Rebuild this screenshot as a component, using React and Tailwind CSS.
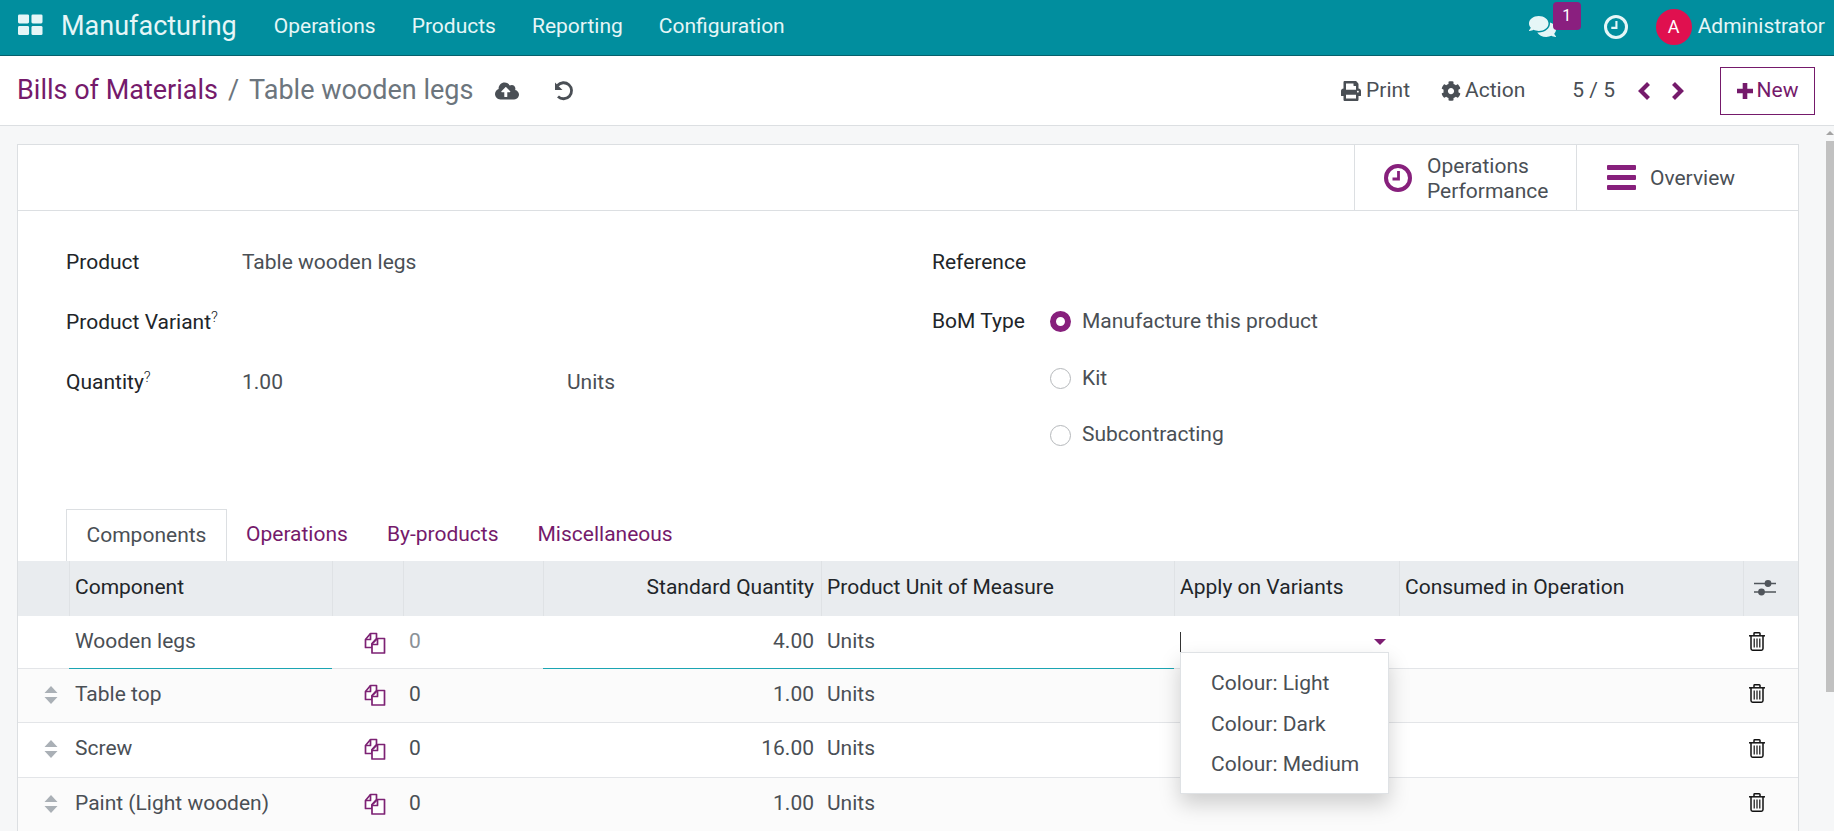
import React from "react";
import { FaComments, FaCloudUploadAlt, FaPrint, FaCog } from "react-icons/fa";

const Clock = ({ size, sw, color, className }) => (
  <svg width={size} height={size} viewBox="0 0 28 28" className={className} fill="none" stroke={color} strokeWidth={sw}>
    <circle cx="14" cy="14" r={14 - sw / 2} />
    <path d="M14.5 7v8H8.5" strokeWidth={sw * 0.7} />
  </svg>
);

const Undo = () => (
  <svg width="22" height="22" viewBox="0 0 22 22" fill="none" stroke="#4a4f55" strokeWidth="2.8">
    <path d="M4.5 5.5A8 8 0 1 1 5 16.5" />
    <path d="M2 2.5v7.5h7.5z" fill="#4a4f55" stroke="none" />
  </svg>
);

const Apps = () => (
  <svg width="25" height="22" viewBox="0 0 26 22" fill="#e6f6f7">
    <rect x="0" y="0" width="11.5" height="9.5" rx="1.5" />
    <rect x="14" y="0" width="11.5" height="9.5" rx="1.5" />
    <rect x="0" y="12" width="11.5" height="9.5" rx="1.5" />
    <rect x="14" y="12" width="11.5" height="9.5" rx="1.5" />
  </svg>
);

const Files = () => (
  <svg width="22" height="22" viewBox="0 0 22 22" fill="#fff" stroke="#7d2274" strokeWidth="1.7" strokeLinejoin="round">
    <path d="M6.5 1.5h6v5l-4.5 5v4H1.5V7.5z" />
    <path d="M6.5 1.5v6h-5" fill="none" />
    <path d="M13.5 6.5h7v14.5h-12.5V12z" />
    <path d="M13.5 6.5v6h-5.5" fill="none" />
  </svg>
);

const Trash = () => (
  <svg width="16" height="19" viewBox="0 0 16 19" fill="none" stroke="#111" strokeWidth="1.5" className="-mt-[2px]">
    <path d="M5 3.5V1.5a.7.7 0 0 1 .7-.7h4.6a.7.7 0 0 1 .7.7v2" />
    <path d="M0 3.8h16" />
    <path d="M2 4v12.6a1.6 1.6 0 0 0 1.6 1.6h8.8a1.6 1.6 0 0 0 1.6-1.6V4" />
    <path d="M5.2 6.5v9M8 6.5v9M10.8 6.5v9" strokeWidth="1.2" />
  </svg>
);

const Sliders = () => (
  <svg width="22" height="18" viewBox="0 0 22 18" fill="#50555b" stroke="#50555b">
    <path d="M0 4.5h22M0 13h22" strokeWidth="1.5" />
    <circle cx="14" cy="4.5" r="3.4" stroke="none" />
    <circle cx="7.5" cy="13" r="3.4" stroke="none" />
  </svg>
);

const Handle = () => (
  <svg width="14" height="18" viewBox="0 0 14 18" fill="#aab0b6">
    <path d="M7 0l6.5 7H.5zM7 18l6.5-7H.5z" />
  </svg>
);

const Chevron = ({ d }) => (
  <svg width="14" height="18" viewBox="0 0 14 18" fill="none" stroke="#751a6b" strokeWidth="4.2">
    <path d={d} />
  </svg>
);

const Plus = () => (
  <svg width="16" height="16" viewBox="0 0 16 16" stroke="#751a6b" strokeWidth="4.6" className="mr-[4px]">
    <path d="M8 0v16M0 8h16" />
  </svg>
);

const Radio = ({ on }) =>
  on ? (
    <span className="w-[21px] h-[21px] rounded-full border-[6px] border-[#87207c] bg-white shrink-0" />
  ) : (
    <span className="w-[21px] h-[21px] rounded-full border border-[#b5b8bb] bg-white shrink-0" />
  );

const cols = "grid grid-cols-[51px_263px_71px_140px_278px_353px_225px_344px_55px]";

const Header = ({ children, className = "" }) => (
  <div className={"border-l border-[#dfe2e5] flex items-center px-[5px] pb-[1px] " + className}>{children}</div>
);

const rows = [
  { name: "Table top", qty: "1.00", bg: "bg-[#fbfbfb]", h: "h-[54px]" },
  { name: "Screw", qty: "16.00", bg: "bg-white", h: "h-[55px]" },
  { name: "Paint (Light wooden)", qty: "1.00", bg: "bg-[#fbfbfb]", h: "h-[54px]" },
];

export default function App() {
  return (
    <div className="w-full h-screen overflow-hidden flex flex-col bg-[#f6f7f8] font-['Roboto',sans-serif] text-[21px] text-[#4a4f55]">
      <nav className="h-[56px] shrink-0 bg-[#018e9e] border-b border-[#06606c] flex items-center pb-[2px] text-[#e6f6f7]">
        <div className="ml-[18px] mr-[18px] -mt-[3px]"><Apps /></div>
        <span className="text-[27px] mr-[37px]">Manufacturing</span>
        <div className="flex gap-[36px] text-[21px]">
          <span>Operations</span>
          <span>Products</span>
          <span>Reporting</span>
          <span>Configuration</span>
        </div>
        <div className="ml-auto flex items-center text-[21px]">
          <div className="relative mr-[48px]">
            <FaComments size={27} className="text-[#e6f6f7]" />
            <span className="absolute left-[24px] top-[-11px] w-[28px] h-[28px] rounded-[4px] bg-[#8a1f7f] text-white text-[16px] flex items-center justify-center">1</span>
          </div>
          <Clock size={24} sw={3.5} color="#e6f6f7" className="mr-[28px]" />
          <span className="w-[36px] h-[36px] rounded-full bg-[#e0104f] text-white text-[18px] flex items-center justify-center mr-[6px]">A</span>
          <span className="mr-[9px]">Administrator</span>
        </div>
      </nav>

      <div className="h-[70px] shrink-0 bg-white border-b border-[#dcdfe2] flex items-center pl-[17px] pr-[19px]">
        <span className="text-[27px] text-[#751a6b]">Bills of Materials</span>
        <span className="text-[27px] text-[#6c757d] mx-[10px]">/</span>
        <span className="text-[27px] text-[#6c757d]">Table wooden legs</span>
        <FaCloudUploadAlt size={24} className="ml-[22px] text-[#4a4f55]" />
        <span className="ml-[34px]"><Undo /></span>
        <div className="ml-auto flex items-center">
          <FaPrint size={20} className="mr-[5px]" />
          <span className="mr-[31px] mt-[1px]">Print</span>
          <FaCog size={20} className="mr-[4px]" />
          <span className="mr-[47px] mt-[1px]">Action</span>
          <span className="mr-[22px]">5 / 5</span>
          <span className="mr-[20px] flex"><Chevron d="M11.5 1.5L4 9l7.5 7.5" /></span>
          <span className="mr-[35px] flex"><Chevron d="M2.5 1.5L10 9l-7.5 7.5" /></span>
          <div className="w-[95px] h-[48px] border border-[#751a6b] flex items-center justify-center text-[#751a6b]">
            <Plus />
            New
          </div>
        </div>
      </div>

      <div className="flex-1 flex min-h-0">
        <div className="flex-1 min-w-0 pl-[17px] pr-[27px] pt-[18px]">
          <div className="bg-white border border-[#dcdfe2] border-b-0 h-full flex flex-col">
            <div className="h-[66px] shrink-0 flex justify-end border-b border-[#dcdfe2]">
              <div className="w-[222px] border-l border-[#dcdfe2] flex items-center pl-[29px]">
                <Clock size={28} sw={4} color="#87207c" />
                <div className="ml-[15px] mt-[2px] leading-[25px]">Operations<br />Performance</div>
              </div>
              <div className="w-[222px] border-l border-[#dcdfe2] flex items-center pl-[30px]">
                <div className="w-[29px] flex flex-col gap-[5px]">
                  <div className="h-[5px] rounded-[1px] bg-[#87207c]" />
                  <div className="h-[5px] rounded-[1px] bg-[#87207c]" />
                  <div className="h-[5px] rounded-[1px] bg-[#87207c]" />
                </div>
                <span className="ml-[14px] mt-[2px]">Overview</span>
              </div>
            </div>

            <div className="h-[298px] shrink-0 pt-[22px] pl-[48px] flex">
              <div className="w-[866px] shrink-0 flex flex-col">
                <div className="h-[60px] flex items-center">
                  <span className="w-[176px] text-[#212529]">Product</span>
                  <span>Table wooden legs</span>
                </div>
                <div className="h-[60px] flex items-center">
                  <span className="text-[#212529]">Product Variant<sup className="text-[15px] font-light">?</sup></span>
                </div>
                <div className="h-[60px] flex items-center">
                  <span className="w-[176px] text-[#212529]">Quantity<sup className="text-[15px] font-light">?</sup></span>
                  <span className="w-[325px]">1.00</span>
                  <span>Units</span>
                </div>
              </div>
              <div className="flex flex-col">
                <div className="h-[60px] flex items-center text-[#212529]">Reference</div>
                <div className="h-[57px] flex items-center">
                  <span className="w-[118px] text-[#212529]">BoM Type</span>
                  <Radio on />
                  <span className="ml-[11px]">Manufacture this product</span>
                </div>
                <div className="h-[57px] flex items-center pl-[118px]">
                  <Radio />
                  <span className="ml-[11px]">Kit</span>
                </div>
                <div className="h-[57px] flex items-center pl-[118px]">
                  <Radio />
                  <span className="ml-[11px] -mt-[1px]">Subcontracting</span>
                </div>
              </div>
            </div>

            <div className="h-[52px] shrink-0 flex pl-[48px]">
              <div className="w-[161px] h-[52px] bg-white border border-[#dcdfe2] border-b-0 flex items-center justify-center">Components</div>
              <div className="flex items-center pl-[19px] gap-[39px] text-[#751a6b]">
                <span>Operations</span>
                <span>By-products</span>
                <span>Miscellaneous</span>
              </div>
            </div>

            <div className={cols + " h-[55px] shrink-0 bg-[#e9ecef] text-[#212529]"}>
              <div />
              <Header>Component</Header>
              <Header />
              <Header />
              <Header className="justify-end pr-[7px]">Standard Quantity</Header>
              <Header>Product Unit of Measure</Header>
              <Header>Apply on Variants</Header>
              <Header>Consumed in Operation</Header>
              <Header className="justify-center pr-[18px]"><Sliders /></Header>
            </div>

            <div className={cols + " h-[53px] shrink-0 bg-white border-b border-[#e3e5e8] items-stretch"}>
              <div />
              <div className="flex items-center px-[6px] border-b border-[#1ba5b3] -mb-px">Wooden legs</div>
              <div className="flex items-center justify-end pr-[17px] -mb-px"><Files /></div>
              <div className="flex items-center pl-[6px] text-[#8b9197]">0</div>
              <div className="flex items-center justify-end pr-[7px] border-b border-[#1ba5b3] -mb-px">4.00</div>
              <div className="flex items-center px-[6px] border-b border-[#1ba5b3] -mb-px">Units</div>
              <div className="relative flex items-center pl-[6px]">
                <div className="w-px h-[20px] bg-[#333]" />
                <div className="ml-auto mr-[13px] w-0 h-0 border-x-[6px] border-x-transparent border-t-[6px] border-t-[#7d1d72]" />
                <div className="absolute left-[6px] top-[36px] w-[209px] h-[142px] bg-white border border-[#dfe2e5] shadow-[0_10px_20px_rgba(0,0,0,0.18)] z-10 flex flex-col justify-center gap-[16.5px] pt-[1px] pl-[30px]">
                  <span className="leading-[24px]">Colour: Light</span>
                  <span className="leading-[24px]">Colour: Dark</span>
                  <span className="leading-[24px]">Colour: Medium</span>
                </div>
              </div>
              <div />
              <div className="flex items-center pl-[6px]"><Trash /></div>
            </div>

            {rows.map((r) => (
              <div key={r.name} className={cols + " shrink-0 border-b border-[#e3e5e8] items-center pb-[2px] " + r.h + " " + r.bg}>
                <div className="flex justify-end pr-[11px]"><Handle /></div>
                <div className="px-[6px]">{r.name}</div>
                <div className="flex justify-end pr-[17px]"><Files /></div>
                <div className="pl-[6px]">0</div>
                <div className="text-right pr-[7px]">{r.qty}</div>
                <div className="px-[6px]">Units</div>
                <div />
                <div />
                <div className="pl-[6px]"><Trash /></div>
              </div>
            ))}
          </div>
        </div>

        <div className="w-[8px] shrink-0 flex flex-col items-center">
          <div className="mt-[5px] w-0 h-0 border-x-[4px] border-x-transparent border-b-[4px] border-b-[#a3a3a3]" />
          <div className="mt-[6px] w-full h-[551px] bg-[#c1c1c1]" />
        </div>
      </div>
    </div>
  );
}
